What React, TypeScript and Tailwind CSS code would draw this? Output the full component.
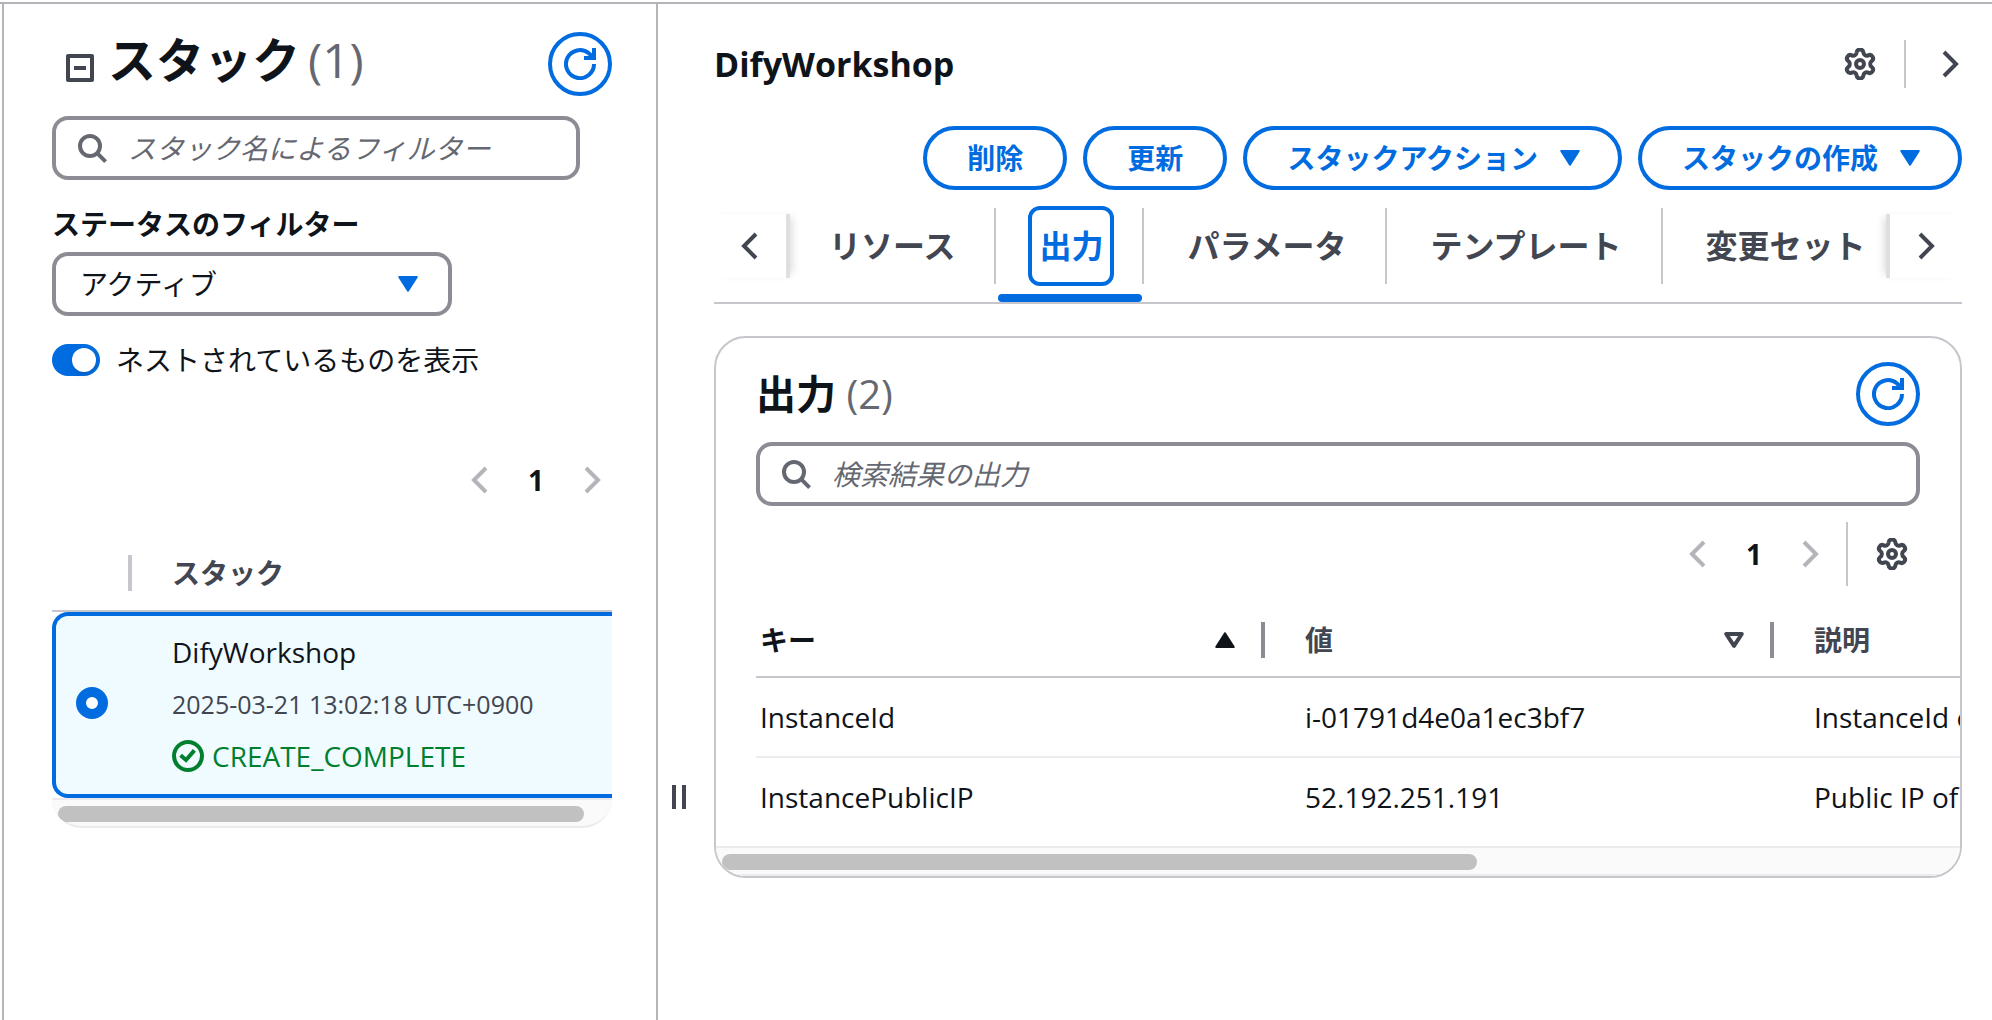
import React, { useState } from 'react';

interface Output {
  key: string;
  value: string;
  description: string;
}

const outputs: Output[] = [
  { key: 'InstanceId', value: 'i-01791d4e0a1ec3bf7', description: 'InstanceId of' },
  { key: 'InstancePublicIP', value: '52.192.251.191', description: 'Public IP of' },
];

const tabs = ['リソース', '出力', 'パラメータ', 'テンプレート', '変更セット'];

function Chevron({ dir }: { dir: 'left' | 'right' }) {
  return (
    <svg viewBox="4 0 8 16" className="w-4 h-8 overflow-visible" fill="none" stroke="currentColor" strokeWidth="2">
      <path d={dir === 'left' ? 'M11 2 5 8l6 6' : 'M5 2l6 6-6 6'} />
    </svg>
  );
}

function Caret() {
  return (
    <svg viewBox="0 0 16 16" className="w-8 h-8" fill="currentColor" stroke="currentColor" strokeWidth="1" strokeLinejoin="round">
      <path d="M3.6 4.5h8.8L8 11.4z" />
    </svg>
  );
}

function Gear() {
  return (
    <svg viewBox="1 1 22 22" className="w-8 h-8" fill="none" stroke="currentColor" strokeWidth="2.75" strokeLinejoin="round">
      <path d="M9.671 4.136a2.34 2.34 0 0 1 4.659 0 2.34 2.34 0 0 0 3.319 1.915 2.34 2.34 0 0 1 2.33 4.033 2.34 2.34 0 0 0 0 3.831 2.34 2.34 0 0 1-2.33 4.033 2.34 2.34 0 0 0-3.319 1.915 2.34 2.34 0 0 1-4.659 0 2.34 2.34 0 0 0-3.32-1.915 2.34 2.34 0 0 1-2.33-4.033 2.34 2.34 0 0 0 0-3.831A2.34 2.34 0 0 1 6.35 6.051a2.34 2.34 0 0 0 3.319-1.915" />
      <circle cx="12" cy="12" r="2.75" />
    </svg>
  );
}

function RefreshButton() {
  return (
    <button aria-label="更新" className="w-16 h-16 shrink-0 rounded-full border-4 border-[#006ce0] text-[#006ce0] flex items-center justify-center">
      <svg viewBox="0 0 16 16" className="w-8 h-8" fill="none" stroke="currentColor" strokeWidth="2">
        <path d="M15 8a7 7 0 1 1-2.6-5.4L15 5" />
        <path d="M15 0v5h-5" />
      </svg>
    </button>
  );
}

function SearchBox({ placeholder }: { placeholder: string }) {
  return (
    <label className="flex items-center gap-5 h-16 px-5 border-4 border-[#8c8c94] rounded-2xl text-[#656871]">
      <svg viewBox="0 0 16 16" className="w-8 h-8 shrink-0" fill="none" stroke="currentColor" strokeWidth="2">
        <circle cx="7" cy="7" r="5" />
        <path d="m10.8 10.8 4 4" />
      </svg>
      <input
        type="text"
        aria-label={placeholder}
        placeholder={placeholder}
        className="flex-1 min-w-0 outline-none text-[28px] text-[#0f141a] placeholder:italic placeholder:text-[#656871]"
      />
    </label>
  );
}

function Pagination() {
  return (
    <div className="flex items-center text-[#b4b4bb]">
      <button aria-label="前のページ"><Chevron dir="left" /></button>
      <button className="w-24 text-center text-[28px] leading-8 font-bold text-[#0f141a]">1</button>
      <button aria-label="次のページ"><Chevron dir="right" /></button>
    </div>
  );
}

function ActionButton({ label, menu }: { label: string; menu?: boolean }) {
  return (
    <button
      className={`h-16 flex items-center gap-4 border-4 border-[#006ce0] rounded-full text-[28px] font-bold text-[#006ce0] whitespace-nowrap ${menu ? 'pl-10 pr-8' : 'px-10'}`}
    >
      {label}
      {menu && <Caret />}
    </button>
  );
}

function StackPanel() {
  const [nested, setNested] = useState(true);

  return (
    <aside className="w-[656px] shrink-0 border-x-2 border-[#b4b4bb] pt-7 pl-12 pr-11">
      <div className="flex items-center justify-between h-16">
        <div className="flex items-center gap-3 pl-3">
          <button aria-label="折りたたむ" className="pt-2 text-[#424650]">
            <svg viewBox="0 0 16 16" className="w-8 h-8" fill="none" stroke="currentColor" strokeWidth="2" strokeLinejoin="round">
              <path d="M2 2h12v12H2zM5 8h6" />
            </svg>
          </button>
          <h1 className="flex gap-2 text-[48px] leading-[60px] font-bold pb-2">
            スタック <span className="font-medium text-[#656871]">(1)</span>
          </h1>
        </div>
        <RefreshButton />
      </div>

      <div className="mt-5 mr-8">
        <SearchBox placeholder="スタック名によるフィルター" />
      </div>

      <label htmlFor="status" className="block mt-6 text-[28px] leading-10 font-bold">ステータスのフィルター</label>
      <div className="relative mt-2 w-[400px]">
        <select id="status" className="appearance-none w-full h-16 px-6 border-4 border-[#8c8c94] rounded-2xl text-[28px] bg-white">
          <option>アクティブ</option>
        </select>
        <span className="absolute right-7 top-4 text-[#006ce0] pointer-events-none"><Caret /></span>
      </div>

      <label className="flex items-center gap-4 mt-6 h-10 text-[28px]">
        <input
          type="checkbox"
          checked={nested}
          onChange={(e) => setNested(e.target.checked)}
          className="appearance-none flex items-center w-12 h-8 px-1 rounded-full bg-[#8c8c94] checked:bg-[#006ce0] checked:justify-end before:block before:w-6 before:h-6 before:rounded-full before:bg-white before:shadow-md"
        />
        ネストされているものを表示
      </label>

      <div className="flex justify-end pr-3 mt-[84px]">
        <Pagination />
      </div>

      <table className="w-full mt-10 border-separate border-spacing-0 text-left">
        <thead>
          <tr className="h-[76px]">
            <th className="w-20 p-0 border-b-2 border-[#c6c6cd]">
              <div className="ml-auto w-1 h-9 bg-[#c6c6cd]" />
            </th>
            <th className="p-0 pl-10 border-b-2 border-[#c6c6cd] text-[28px] font-bold text-[#424650]">スタック</th>
          </tr>
        </thead>
        <tbody>
          <tr className="bg-[#f0fbff]">
            <td className="p-0 pl-5 pb-1 border-y-4 border-l-4 border-[#006ce0] rounded-l-2xl">
              <input
                type="radio"
                name="stack"
                aria-label="DifyWorkshop"
                defaultChecked
                className="block appearance-none w-8 h-8 rounded-full bg-white border-[10px] border-[#006ce0]"
              />
            </td>
            <td className="pl-10 pt-4 pb-[18px] border-y-4 border-[#006ce0] leading-10">
              <div className="flex flex-col gap-3">
                <span className="text-[28px]">DifyWorkshop</span>
                <span className="text-[25px] text-[#424650]">2025-03-21 13:02:18 UTC+0900</span>
                <span className="flex items-center gap-2 text-[28px] text-[#00802f]">
                  <svg viewBox="0 0 16 16" className="w-8 h-8" fill="none" stroke="currentColor" strokeWidth="2">
                    <circle cx="8" cy="8" r="7" />
                    <path d="m4.3 7.6 2.7 2.4 4.2-4.8" />
                  </svg>
                  CREATE_COMPLETE
                </span>
              </div>
            </td>
          </tr>
        </tbody>
      </table>
      <div className="h-[30px] pt-1.5 pl-1.5 border-y-2 border-[#ebebeb] bg-[#fafafa] rounded-b-[32px] overflow-hidden">
        <div className="w-[95%] h-4 rounded-full bg-[#c1c1c1]" />
      </div>
    </aside>
  );
}

function Tabs() {
  const [active, setActive] = useState('出力');

  return (
    <div className="flex items-center h-[114px] border-b-2 border-[#c6c6cd] text-[#424650]">
      <button aria-label="左へスクロール" className="flex items-center w-[76px] h-16 pl-7 shrink-0 border-r-4 border-[#dedee3] shadow-[6px_0_8px_-4px_rgba(0,7,22,0.15)]">
        <Chevron dir="left" />
      </button>
      <div role="tablist" className="flex flex-1 min-w-0 h-full -ml-1 overflow-hidden">
        {tabs.map((tab, i) => (
          <div key={tab} className="relative flex items-center h-full shrink-0">
            <button
              role="tab"
              aria-selected={tab === active}
              onClick={() => setActive(tab)}
              className={`h-20 ml-8 mr-7 px-[7px] border-4 rounded-xl text-[32px] font-bold whitespace-nowrap ${
                tab === active ? 'border-[#006ce0] text-[#006ce0]' : 'border-transparent'
              }`}
            >
              {tab}
            </button>
            {i < tabs.length - 1 && <span className="w-0.5 h-[76px] bg-[#c6c6cd]" />}
            {tab === active && <span className="absolute left-0.5 right-0.5 bottom-0 h-2 rounded bg-[#006ce0]" />}
          </div>
        ))}
      </div>
      <button aria-label="右へスクロール" className="flex items-center w-[76px] h-16 pl-7 shrink-0 border-l-4 border-[#dedee3] shadow-[-6px_0_8px_-4px_rgba(0,7,22,0.15)]">
        <Chevron dir="right" />
      </button>
    </div>
  );
}

function OutputsCard() {
  return (
    <section className="mt-8 border-2 border-[#c6c6cd] rounded-[32px] overflow-hidden">
      <div className="px-10 pt-6">
        <div className="flex items-center justify-between h-16">
          <h2 className="text-[40px] leading-[48px] font-bold">
            出力 <span className="font-medium text-[#656871]">(2)</span>
          </h2>
          <RefreshButton />
        </div>
        <div className="mt-4">
          <SearchBox placeholder="検索結果の出力" />
        </div>
        <div className="flex items-center justify-end h-16 mt-4 pr-3">
          <Pagination />
          <span className="w-0.5 h-16 mx-7 bg-[#c6c6cd]" />
          <button aria-label="設定" className="text-[#424650]"><Gear /></button>
        </div>
      </div>

      <div className="mt-[18px] pl-10 pb-[10px] overflow-hidden">
        <table className="w-[1980px] table-fixed border-separate border-spacing-0 text-left text-[28px] whitespace-nowrap">
          <thead>
            <tr className="h-[74px] text-[#424650]">
              <th className="w-[509px] p-0 pl-1 border-b-2 border-[#c6c6cd]">
                <div className="flex items-center justify-between text-[#0f141a]">
                  キー
                  <span className="flex items-center gap-5">
                    <svg viewBox="0 0 16 16" className="w-8 h-8" fill="currentColor" stroke="currentColor" strokeLinejoin="round">
                      <path d="M3.6 11.5h8.8L8 4.6z" />
                    </svg>
                    <span className="w-1 h-9 bg-[#8c8c94]" />
                  </span>
                </div>
              </th>
              <th className="w-[509px] p-0 pl-10 border-b-2 border-[#c6c6cd]">
                <div className="flex items-center justify-between">
                  値
                  <span className="flex items-center gap-5">
                    <svg viewBox="0 0 16 16" className="w-8 h-8" fill="none" stroke="currentColor" strokeWidth="2" strokeLinejoin="round">
                      <path d="M4.1 5h7.8L8 10.9z" />
                    </svg>
                    <span className="w-1 h-9 bg-[#8c8c94]" />
                  </span>
                </div>
              </th>
              <th className="p-0 pl-10 border-b-2 border-[#c6c6cd]">説明</th>
            </tr>
          </thead>
          <tbody>
            {outputs.map((row, i) => {
              const last = i === outputs.length - 1;
              const line = last ? '' : 'border-b-2 border-[#ebebf0]';
              return (
                <tr key={row.key} className={last ? 'h-[78px]' : 'h-20'}>
                  <td className={`p-0 pl-1 ${line}`}>{row.key}</td>
                  <td className={`p-0 pl-10 ${line}`}>{row.value}</td>
                  <td className={`p-0 pl-10 ${line}`}>{row.description}</td>
                </tr>
              );
            })}
          </tbody>
        </table>
      </div>
      <div className="h-[30px] pt-1.5 pl-1.5 border-y-2 border-[#ebebeb] bg-[#fafafa]">
        <div className="w-[61%] h-4 rounded-full bg-[#c1c1c1]" />
      </div>
    </section>
  );
}

export default function App() {
  return (
    <div className="min-h-screen flex flex-col pt-0.5 bg-white text-[#0f141a] font-['Open_Sans','Noto_Sans_CJK_JP',sans-serif]">
      <div className="flex flex-1 pl-0.5 border-t-2 border-[#b4b4bb]">
        <StackPanel />

        {/* drag handle between the two panels */}
        <div className="flex items-end gap-1.5 w-14 shrink-0 pl-3.5 pb-[211px]">
          <span className="w-1 h-6 bg-[#424650]" />
          <span className="w-1 h-6 bg-[#424650]" />
        </div>

        <main className="flex-1 min-w-0 pt-9 pr-[30px]">
          <div className="flex items-center h-12 pr-1 text-[#424650]">
            <h2 className="flex-1 text-[34px] leading-[48px] font-bold text-[#0f141a]">DifyWorkshop</h2>
            <button aria-label="設定"><Gear /></button>
            <span className="w-0.5 h-12 ml-7 mr-9 bg-[#c6c6cd]" />
            <button aria-label="次へ"><Chevron dir="right" /></button>
          </div>
          <div className="flex justify-end gap-4 mt-[38px]">
            <ActionButton label="削除" />
            <ActionButton label="更新" />
            <ActionButton label="スタックアクション" menu />
            <ActionButton label="スタックの作成" menu />
          </div>
          <Tabs />
          <OutputsCard />
        </main>
      </div>
    </div>
  );
}
